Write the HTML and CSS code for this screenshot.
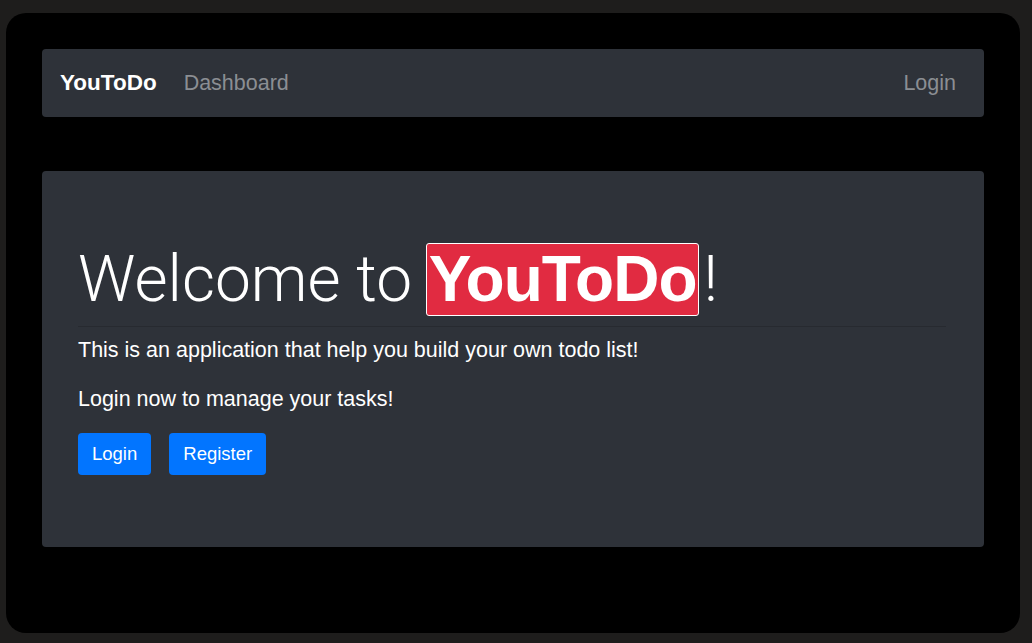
FILE: index.html
```html
<!DOCTYPE html>
<html lang="en">
<head>
<meta charset="utf-8">
<title>YouToDo</title>
<link rel="stylesheet" href="styles.css">
</head>
<body>
<div class="frame">
  <nav class="navbar">
    <a class="brand" href="#">YouToDo</a>
    <a class="nav-link" href="#">Dashboard</a>
    <span class="spacer"></span>
    <a class="nav-link" href="#">Login</a>
  </nav>
  <section class="jumbotron">
    <h1 class="title">Welcome to <span class="badge">YouToDo</span>!</h1>
    <hr class="divider">
    <p class="lead">This is an application that help you build your own todo list!</p>
    <p class="lead">Login now to manage your tasks!</p>
    <div class="actions">
      <a class="btn" href="#">Login</a>
      <a class="btn" href="#">Register</a>
    </div>
  </section>
</div>
</body>
</html>
```

FILE: styles.css
```css
* { box-sizing: border-box; }
html, body { margin: 0; padding: 0; }
body {
  background: #1e1d1c;
  font-family: "Liberation Sans", Arial, sans-serif;
  color: #fff;
  width: 1032px;
  height: 643px;
  overflow: hidden;
}
.frame {
  margin: 13px 12px 0 6px;
  height: 620px;
  background: #000;
  border-radius: 20px;
  padding: 36px 36px 0 36px;
}
.navbar {
  height: 68px;
  background: #2e3239;
  border-radius: 4px;
  display: flex;
  align-items: center;
  padding: 0 18px;
}
.navbar a { text-decoration: none; font-size: 21.5px; }
.navbar .brand {
  color: #fff;
  font-weight: bold;
  font-size: 22.5px;
  margin-right: 17px;
}
.nav-link {
  color: #8b8e93;
  padding: 0 10px;
}
.spacer { flex: 1; }
.jumbotron {
  margin-top: 54px;
  background: #2e3239;
  border-radius: 4px;
  height: 376px;
  padding: 72px 38px 0 36px;
}
.title {
  margin: 0;
  font-family: Roboto, "Liberation Sans", sans-serif;
  font-weight: 300;
  font-size: 64px;
  line-height: 64px;
  color: #fff;
}
.badge {
  display: inline-block;
  background: #e12b41;
  border: 1px solid #fff;
  border-radius: 3px;
  font-family: "Liberation Sans", Arial, sans-serif;
  font-weight: bold;
  line-height: 71px;
  letter-spacing: -1px;
  padding: 0 1px 0 2px;
  margin-left: -2px;
  margin-right: 5px;
}
.divider {
  margin: 10px 0 8px 0;
  border: 0;
  border-top: 1px solid #272a30;
}
.lead {
  margin: 0 0 19px 0;
  font-size: 21.5px;
  line-height: 30px;
}
.actions {
  display: flex;
  gap: 18px;
}
.btn {
  display: inline-flex;
  align-items: center;
  height: 42px;
  padding: 0 14px;
  background: #0275ff;
  color: #fff;
  border-radius: 4px;
  font-size: 18.5px;
  text-decoration: none;
}
```
